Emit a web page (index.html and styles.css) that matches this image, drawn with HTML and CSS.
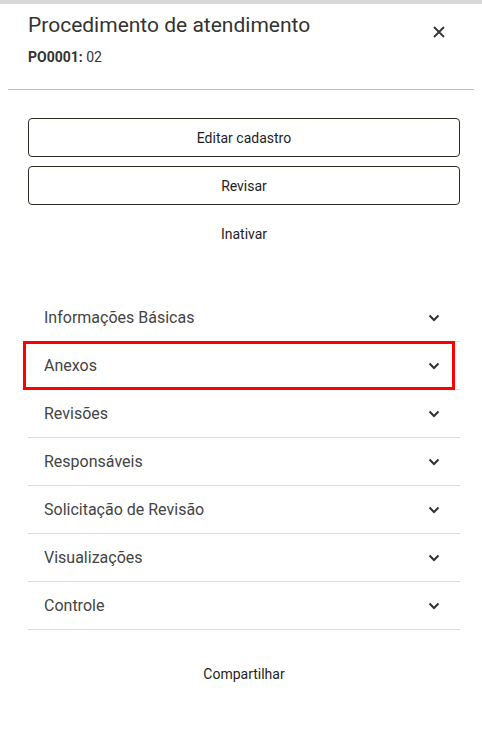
FILE: index.html
```html
<!DOCTYPE html>
<html lang="pt">
<head>
<meta charset="utf-8">
<link rel="stylesheet" href="styles.css">
</head>
<body>
<div class="topbar"></div>
<header class="header">
  <div class="titles">
    <h1 class="title">Procedimento de atendimento</h1>
    <div class="subtitle"><strong>PO0001:</strong> 02</div>
  </div>
  <button class="close" aria-label="Fechar">
    <svg width="12" height="12" viewBox="0 0 12 12"><path d="M1 1L11 11M11 1L1 11" stroke="#333" stroke-width="1.8" fill="none"/></svg>
  </button>
</header>
<div class="divider"></div>
<section class="actions">
  <button class="btn outline">Editar cadastro</button>
  <button class="btn outline">Revisar</button>
  <button class="btn text">Inativar</button>
</section>
<ul class="accordion">
  <li class="item"><span>Informações Básicas</span><svg class="chev" width="12" height="8" viewBox="0 0 12 8"><path d="M1.5 1.5L6 6L10.5 1.5" stroke="#333" stroke-width="2" fill="none"/></svg></li>
  <li class="item highlighted"><span>Anexos</span><svg class="chev" width="12" height="8" viewBox="0 0 12 8"><path d="M1.5 1.5L6 6L10.5 1.5" stroke="#333" stroke-width="2" fill="none"/></svg></li>
  <li class="item"><span>Revisões</span><svg class="chev" width="12" height="8" viewBox="0 0 12 8"><path d="M1.5 1.5L6 6L10.5 1.5" stroke="#333" stroke-width="2" fill="none"/></svg></li>
  <li class="item"><span>Responsáveis</span><svg class="chev" width="12" height="8" viewBox="0 0 12 8"><path d="M1.5 1.5L6 6L10.5 1.5" stroke="#333" stroke-width="2" fill="none"/></svg></li>
  <li class="item"><span>Solicitação de Revisão</span><svg class="chev" width="12" height="8" viewBox="0 0 12 8"><path d="M1.5 1.5L6 6L10.5 1.5" stroke="#333" stroke-width="2" fill="none"/></svg></li>
  <li class="item"><span>Visualizações</span><svg class="chev" width="12" height="8" viewBox="0 0 12 8"><path d="M1.5 1.5L6 6L10.5 1.5" stroke="#333" stroke-width="2" fill="none"/></svg></li>
  <li class="item"><span>Controle</span><svg class="chev" width="12" height="8" viewBox="0 0 12 8"><path d="M1.5 1.5L6 6L10.5 1.5" stroke="#333" stroke-width="2" fill="none"/></svg></li>
</ul>
<footer class="footer">
  <button class="btn text">Compartilhar</button>
</footer>
</body>
</html>
```
FILE: styles.css
```css
* { box-sizing: border-box; }
html, body { margin: 0; padding: 0; background: #fff; }
body {
  font-family: Roboto, "Liberation Sans", Arial, sans-serif;
  color: #333;
  width: 482px;
}
.topbar { height: 4px; background: #d9d9d9; }
.header {
  display: flex;
  justify-content: space-between;
  align-items: flex-start;
  padding: 9px 34px 0 28px;
  height: 85px;
}
.title {
  margin: 0;
  font-size: 21px;
  font-weight: 400;
  line-height: 25px;
  color: #333;
}
.subtitle {
  margin-top: 11px;
  font-size: 14px;
  line-height: 16px;
  color: #333;
}
.subtitle strong { font-weight: 700; }
.close {
  border: none;
  background: none;
  padding: 0;
  margin-top: 10px;
  width: 18px;
  height: 18px;
  display: flex;
  align-items: center;
  justify-content: center;
  cursor: pointer;
}
.divider {
  height: 1px;
  background: #bdbdbd;
  margin: 0 8px;
}
.actions {
  display: flex;
  flex-direction: column;
  gap: 9px;
  padding: 28px 22px 0 28px;
}
.btn {
  font-family: inherit;
  font-size: 14px;
  font-weight: 400;
  color: #1e1e1e;
  background: #fff;
  height: 39px;
  width: 100%;
  cursor: pointer;
}
.btn.outline {
  border: 1px solid #2b2b20;
  border-radius: 4px;
}
.btn.text { border: none; }
.accordion {
  list-style: none;
  margin: 0;
  padding: 0 22px 0 28px;
  margin-top: 41px;
}
.item {
  display: flex;
  align-items: center;
  justify-content: space-between;
  height: 48px;
  padding: 0 20px 0 16px;
  font-size: 16px;
  color: #444;
  border-bottom: 1px solid #dcdcdc;
  position: relative;
}
.highlighted::after {
  content: "";
  position: absolute;
  left: -5px;
  right: 5px;
  top: -1px;
  bottom: -1px;
  border: 3px solid #f00;
}
.chev { display: block; }
.footer {
  padding: 24px 22px 0 28px;
}
```
